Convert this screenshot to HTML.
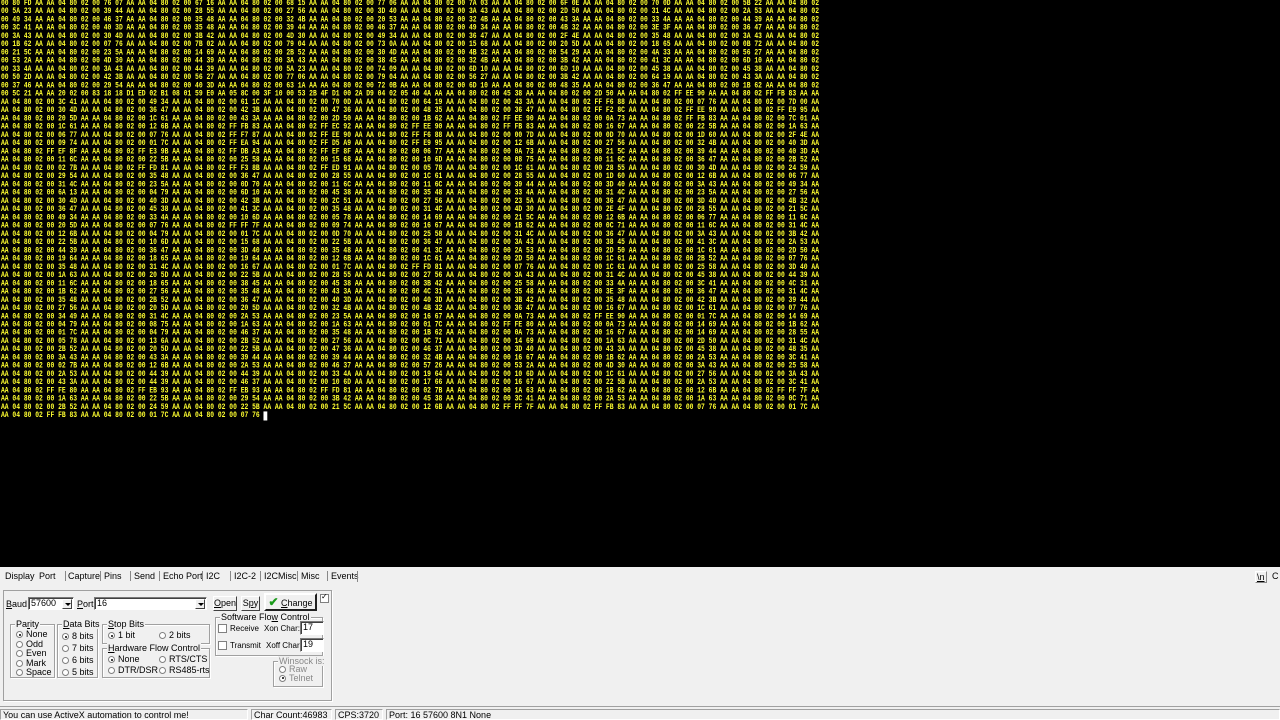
<!DOCTYPE html>
<html><head><meta charset="utf-8">
<style>
*{margin:0;padding:0;box-sizing:border-box}
body{width:1280px;height:720px;overflow:hidden;background:#f0f0f0;font-family:"Liberation Sans",sans-serif;font-size:9px;color:#000;position:relative}
#term{position:absolute;left:0;top:0;width:1280px;height:567px;background:#000;overflow:hidden}
#hex{position:absolute;left:1px;top:0;white-space:pre;font-family:"Liberation Mono",monospace;font-weight:bold;font-size:10px;line-height:10px;color:#ffff30;transform:scale(0.634,0.8245);transform-origin:0 0}
.cur{background:#fff;color:#fff}
.a{position:absolute;white-space:nowrap}
.tabs{position:absolute;top:571px;left:0;height:14px;width:1280px}
.box{position:absolute;border:1px solid #a0a0a0;box-shadow:1px 1px 0 #fff}
.grp{position:absolute;border:1px solid #a0a0a0;box-shadow:inset 1px 1px 0 #fff,1px 1px 0 #fff}
.lg{position:absolute;top:-6px;left:4px;background:#f0f0f0;padding:0 1px;white-space:nowrap}
.rad{display:inline-block;width:7px;height:7px;border-radius:50%;border:1px solid #808080;background:#fff;vertical-align:-1px;margin-right:3px;position:relative}
.rad.on::after{content:"";position:absolute;left:1.5px;top:1.5px;width:2px;height:2px;border-radius:50%;background:#000}
.chk{position:absolute;width:9px;height:9px;border:1px solid #808080;background:#fff}
.inp{position:absolute;background:#fff;border:1px solid #7a7a7a;border-right-color:#fff;border-bottom-color:#fff;box-shadow:inset 1px 1px 0 #404040;padding-left:2px;line-height:11px}
.btn{position:absolute;border:1px solid #fff;border-right-color:#404040;border-bottom-color:#404040;background:#f0f0f0;text-align:center;line-height:13px}
.dd{position:absolute;right:1px;top:1px;width:10px;height:10px;background:#f0f0f0;border:1px solid #fff;border-right-color:#404040;border-bottom-color:#404040}
.dd::after{content:"";position:absolute;left:2px;top:3px;border-left:3px solid transparent;border-right:3px solid transparent;border-top:3px solid #000}
.sb{position:absolute;top:709px;height:11px;border:1px solid #a0a0a0;border-right-color:#fff;border-bottom-color:#fff;line-height:10px;padding-left:2px;white-space:nowrap}
u{text-decoration:underline}
</style></head><body>
<div id="term"><div id="hex">00 80 FD AA AA 04 80 02 00 76 07 AA AA 04 80 02 00 67 16 AA AA 04 80 02 00 68 15 AA AA 04 80 02 00 77 06 AA AA 04 80 02 00 7A 03 AA AA 04 80 02 00 6F 0E AA AA 04 80 02 00 70 0D AA AA 04 80 02 00 5B 22 AA AA 04 80 02
00 5A 23 AA AA 04 80 02 00 39 44 AA AA 04 80 02 00 28 55 AA AA 04 80 02 00 27 56 AA AA 04 80 02 00 3D 40 AA AA 04 80 02 00 3A 43 AA AA 04 80 02 00 2D 50 AA AA 04 80 02 00 31 4C AA AA 04 80 02 00 2A 53 AA AA 04 80 02
00 49 34 AA AA 04 80 02 00 46 37 AA AA 04 80 02 00 35 48 AA AA 04 80 02 00 32 4B AA AA 04 80 02 00 20 53 AA AA 04 80 02 00 32 4B AA AA 04 80 02 00 43 3A AA AA 04 80 02 00 33 4A AA AA 04 80 02 00 44 39 AA AA 04 80 02
00 3C 41 AA AA 04 80 02 00 40 3D AA AA 04 80 02 00 35 48 AA AA 04 80 02 00 39 44 AA AA 04 80 02 00 46 37 AA AA 04 80 02 00 49 34 AA AA 04 80 02 00 4B 32 AA AA 04 80 02 00 3E 3F AA AA 04 80 02 00 36 47 AA AA 04 80 02
00 3A 43 AA AA 04 80 02 00 30 4D AA AA 04 80 02 00 3B 42 AA AA 04 80 02 00 4D 30 AA AA 04 80 02 00 49 34 AA AA 04 80 02 00 36 47 AA AA 04 80 02 00 2F 4E AA AA 04 80 02 00 35 48 AA AA 04 80 02 00 3A 43 AA AA 04 80 02
00 1B 62 AA AA 04 80 02 00 07 76 AA AA 04 80 02 00 7B 02 AA AA 04 80 02 00 79 04 AA AA 04 80 02 00 73 0A AA AA 04 80 02 00 15 68 AA AA 04 80 02 00 20 5D AA AA 04 80 02 00 18 65 AA AA 04 80 02 00 0B 72 AA AA 04 80 02
00 21 5C AA AA 04 80 02 00 23 5A AA AA 04 80 02 00 14 69 AA AA 04 80 02 00 2B 52 AA AA 04 80 02 00 30 4D AA AA 04 80 02 00 4B 32 AA AA 04 80 02 00 54 29 AA AA 04 80 02 00 4A 33 AA AA 04 80 02 00 56 27 AA AA 04 80 02
00 53 2A AA AA 04 80 02 00 4D 30 AA AA 04 80 02 00 44 39 AA AA 04 80 02 00 3A 43 AA AA 04 80 02 00 38 45 AA AA 04 80 02 00 32 4B AA AA 04 80 02 00 3B 42 AA AA 04 80 02 00 41 3C AA AA 04 80 02 00 6D 10 AA AA 04 80 02
00 33 4A AA AA 04 80 02 00 3A 43 AA AA 04 80 02 00 44 39 AA AA 04 80 02 00 5A 23 AA AA 04 80 02 00 74 09 AA AA 04 80 02 00 6D 10 AA AA 04 80 02 00 6D 10 AA AA 04 80 02 00 45 38 AA AA 04 80 02 00 45 38 AA AA 04 80 02
00 50 2D AA AA 04 80 02 00 42 3B AA AA 04 80 02 00 56 27 AA AA 04 80 02 00 77 06 AA AA 04 80 02 00 79 04 AA AA 04 80 02 00 56 27 AA AA 04 80 02 00 3B 42 AA AA 04 80 02 00 64 19 AA AA 04 80 02 00 43 3A AA AA 04 80 02
00 37 46 AA AA 04 80 02 00 29 54 AA AA 04 80 02 00 40 3D AA AA 04 80 02 00 63 1A AA AA 04 80 02 00 72 0B AA AA 04 80 02 00 6D 10 AA AA 04 80 02 00 48 35 AA AA 04 80 02 00 36 47 AA AA 04 80 02 00 1B 62 AA AA 04 80 02
00 5C 21 AA AA 20 02 00 83 18 18 D1 ED 02 B1 08 01 59 E0 AA 05 8C 00 3F 10 00 53 2B 4F D1 00 2A D9 04 02 05 40 4A AA AA 04 80 02 00 45 38 AA AA 04 80 02 00 2D 50 AA AA 04 80 02 FF EE 90 AA AA 04 80 02 FF FB 83 AA AA
AA 04 80 02 00 3C 41 AA AA 04 80 02 00 49 34 AA AA 04 80 02 00 61 1C AA AA 04 80 02 00 70 0D AA AA 04 80 02 00 64 19 AA AA 04 80 02 00 43 3A AA AA 04 80 02 FF F6 88 AA AA 04 80 02 00 07 76 AA AA 04 80 02 00 7D 00 AA
AA 04 80 02 00 30 4D AA AA 04 80 02 00 36 47 AA AA 04 80 02 00 42 3B AA AA 04 80 02 00 47 36 AA AA 04 80 02 00 48 35 AA AA 04 80 02 00 36 47 AA AA 04 80 02 FF F2 8C AA AA 04 80 02 FF EE 90 AA AA 04 80 02 FF E9 95 AA
AA 04 80 02 00 20 5D AA AA 04 80 02 00 1C 61 AA AA 04 80 02 00 43 3A AA AA 04 80 02 00 2D 50 AA AA 04 80 02 00 1B 62 AA AA 04 80 02 FF EE 90 AA AA 04 80 02 00 0A 73 AA AA 04 80 02 FF FB 83 AA AA 04 80 02 00 7C 01 AA
AA 04 80 02 00 1C 61 AA AA 04 80 02 00 12 6B AA AA 04 80 02 FF FB 83 AA AA 04 80 02 FF EC 92 AA AA 04 80 02 FF EE 90 AA AA 04 80 02 FF FB 83 AA AA 04 80 02 00 16 67 AA AA 04 80 02 00 22 5B AA AA 04 80 02 00 1A 63 AA
AA 04 80 02 00 06 77 AA AA 04 80 02 00 07 76 AA AA 04 80 02 FF F7 87 AA AA 04 80 02 FF EE 90 AA AA 04 80 02 FF F6 88 AA AA 04 80 02 00 00 7D AA AA 04 80 02 00 0D 70 AA AA 04 80 02 00 1D 60 AA AA 04 80 02 00 2F 4E AA
AA 04 80 02 00 09 74 AA AA 04 80 02 00 01 7C AA AA 04 80 02 FF EA 94 AA AA 04 80 02 FF D5 A9 AA AA 04 80 02 FF E9 95 AA AA 04 80 02 00 12 6B AA AA 04 80 02 00 27 56 AA AA 04 80 02 00 32 4B AA AA 04 80 02 00 40 3D AA
AA 04 80 02 FF EF 8F AA AA 04 80 02 FF E3 9B AA AA 04 80 02 FF DB A3 AA AA 04 80 02 FF EF 8F AA AA 04 80 02 00 06 77 AA AA 04 80 02 00 0A 73 AA AA 04 80 02 00 21 5C AA AA 04 80 02 00 39 44 AA AA 04 80 02 00 40 3D AA
AA 04 80 02 00 11 6C AA AA 04 80 02 00 22 5B AA AA 04 80 02 00 25 58 AA AA 04 80 02 00 15 68 AA AA 04 80 02 00 10 6D AA AA 04 80 02 00 08 75 AA AA 04 80 02 00 11 6C AA AA 04 80 02 00 36 47 AA AA 04 80 02 00 2B 52 AA
AA 04 80 02 00 02 7B AA AA 04 80 02 FF FD 81 AA AA 04 80 02 FF F3 8B AA AA 04 80 02 FF ED 91 AA AA 04 80 02 00 05 78 AA AA 04 80 02 00 1C 61 AA AA 04 80 02 00 28 55 AA AA 04 80 02 00 30 4D AA AA 04 80 02 00 24 59 AA
AA 04 80 02 00 29 54 AA AA 04 80 02 00 35 48 AA AA 04 80 02 00 36 47 AA AA 04 80 02 00 28 55 AA AA 04 80 02 00 1C 61 AA AA 04 80 02 00 28 55 AA AA 04 80 02 00 1D 60 AA AA 04 80 02 00 12 6B AA AA 04 80 02 00 06 77 AA
AA 04 80 02 00 31 4C AA AA 04 80 02 00 23 5A AA AA 04 80 02 00 0D 70 AA AA 04 80 02 00 11 6C AA AA 04 80 02 00 11 6C AA AA 04 80 02 00 39 44 AA AA 04 80 02 00 3D 40 AA AA 04 80 02 00 3A 43 AA AA 04 80 02 00 49 34 AA
AA 04 80 02 00 6A 13 AA AA 04 80 02 00 04 79 AA AA 04 80 02 00 6D 10 AA AA 04 80 02 00 45 38 AA AA 04 80 02 00 35 48 AA AA 04 80 02 00 33 4A AA AA 04 80 02 00 31 4C AA AA 04 80 02 00 23 5A AA AA 04 80 02 00 27 56 AA
AA 04 80 02 00 30 4D AA AA 04 80 02 00 40 3D AA AA 04 80 02 00 42 3B AA AA 04 80 02 00 2C 51 AA AA 04 80 02 00 27 56 AA AA 04 80 02 00 23 5A AA AA 04 80 02 00 36 47 AA AA 04 80 02 00 3D 40 AA AA 04 80 02 00 4B 32 AA
AA 04 80 02 00 36 47 AA AA 04 80 02 00 45 38 AA AA 04 80 02 00 41 3C AA AA 04 80 02 00 35 48 AA AA 04 80 02 00 31 4C AA AA 04 80 02 00 4D 30 AA AA 04 80 02 00 2E 4F AA AA 04 80 02 00 28 55 AA AA 04 80 02 00 21 5C AA
AA 04 80 02 00 49 34 AA AA 04 80 02 00 33 4A AA AA 04 80 02 00 10 6D AA AA 04 80 02 00 05 78 AA AA 04 80 02 00 14 69 AA AA 04 80 02 00 21 5C AA AA 04 80 02 00 12 6B AA AA 04 80 02 00 06 77 AA AA 04 80 02 00 11 6C AA
AA 04 80 02 00 20 5D AA AA 04 80 02 00 07 76 AA AA 04 80 02 FF FF 7F AA AA 04 80 02 00 09 74 AA AA 04 80 02 00 16 67 AA AA 04 80 02 00 1B 62 AA AA 04 80 02 00 0C 71 AA AA 04 80 02 00 11 6C AA AA 04 80 02 00 31 4C AA
AA 04 80 02 00 12 6B AA AA 04 80 02 00 04 79 AA AA 04 80 02 00 01 7C AA AA 04 80 02 00 0D 70 AA AA 04 80 02 00 25 58 AA AA 04 80 02 00 31 4C AA AA 04 80 02 00 36 47 AA AA 04 80 02 00 3A 43 AA AA 04 80 02 00 3B 42 AA
AA 04 80 02 00 22 5B AA AA 04 80 02 00 10 6D AA AA 04 80 02 00 15 68 AA AA 04 80 02 00 22 5B AA AA 04 80 02 00 36 47 AA AA 04 80 02 00 3A 43 AA AA 04 80 02 00 38 45 AA AA 04 80 02 00 41 3C AA AA 04 80 02 00 2A 53 AA
AA 04 80 02 00 44 39 AA AA 04 80 02 00 36 47 AA AA 04 80 02 00 3D 40 AA AA 04 80 02 00 35 48 AA AA 04 80 02 00 41 3C AA AA 04 80 02 00 2A 53 AA AA 04 80 02 00 2D 50 AA AA 04 80 02 00 1C 61 AA AA 04 80 02 00 2D 50 AA
AA 04 80 02 00 19 64 AA AA 04 80 02 00 18 65 AA AA 04 80 02 00 19 64 AA AA 04 80 02 00 12 6B AA AA 04 80 02 00 1C 61 AA AA 04 80 02 00 2D 50 AA AA 04 80 02 00 1C 61 AA AA 04 80 02 00 2B 52 AA AA 04 80 02 00 07 76 AA
AA 04 80 02 00 35 48 AA AA 04 80 02 00 31 4C AA AA 04 80 02 00 16 67 AA AA 04 80 02 00 01 7C AA AA 04 80 02 FF FD 81 AA AA 04 80 02 00 07 76 AA AA 04 80 02 00 1C 61 AA AA 04 80 02 00 25 58 AA AA 04 80 02 00 3D 40 AA
AA 04 80 02 00 1A 63 AA AA 04 80 02 00 20 5D AA AA 04 80 02 00 22 5B AA AA 04 80 02 00 28 55 AA AA 04 80 02 00 27 56 AA AA 04 80 02 00 3A 43 AA AA 04 80 02 00 31 4C AA AA 04 80 02 00 45 38 AA AA 04 80 02 00 44 39 AA
AA 04 80 02 00 11 6C AA AA 04 80 02 00 18 65 AA AA 04 80 02 00 38 45 AA AA 04 80 02 00 45 38 AA AA 04 80 02 00 3B 42 AA AA 04 80 02 00 25 58 AA AA 04 80 02 00 33 4A AA AA 04 80 02 00 3C 41 AA AA 04 80 02 00 4C 31 AA
AA 04 80 02 00 1B 62 AA AA 04 80 02 00 27 56 AA AA 04 80 02 00 35 48 AA AA 04 80 02 00 43 3A AA AA 04 80 02 00 4C 31 AA AA 04 80 02 00 35 48 AA AA 04 80 02 00 3E 3F AA AA 04 80 02 00 36 47 AA AA 04 80 02 00 31 4C AA
AA 04 80 02 00 35 48 AA AA 04 80 02 00 2B 52 AA AA 04 80 02 00 36 47 AA AA 04 80 02 00 40 3D AA AA 04 80 02 00 40 3D AA AA 04 80 02 00 3B 42 AA AA 04 80 02 00 35 48 AA AA 04 80 02 00 42 3B AA AA 04 80 02 00 39 44 AA
AA 04 80 02 00 27 56 AA AA 04 80 02 00 20 5D AA AA 04 80 02 00 20 5D AA AA 04 80 02 00 32 4B AA AA 04 80 02 00 4B 32 AA AA 04 80 02 00 36 47 AA AA 04 80 02 00 16 67 AA AA 04 80 02 00 1C 61 AA AA 04 80 02 00 07 76 AA
AA 04 80 02 00 34 49 AA AA 04 80 02 00 31 4C AA AA 04 80 02 00 2A 53 AA AA 04 80 02 00 23 5A AA AA 04 80 02 00 16 67 AA AA 04 80 02 00 0A 73 AA AA 04 80 02 FF EE 90 AA AA 04 80 02 00 01 7C AA AA 04 80 02 00 14 69 AA
AA 04 80 02 00 04 79 AA AA 04 80 02 00 08 75 AA AA 04 80 02 00 1A 63 AA AA 04 80 02 00 1A 63 AA AA 04 80 02 00 01 7C AA AA 04 80 02 FF FE 80 AA AA 04 80 02 00 0A 73 AA AA 04 80 02 00 14 69 AA AA 04 80 02 00 1B 62 AA
AA 04 80 02 00 01 7C AA AA 04 80 02 00 04 79 AA AA 04 80 02 00 46 37 AA AA 04 80 02 00 35 48 AA AA 04 80 02 00 1B 62 AA AA 04 80 02 00 0A 73 AA AA 04 80 02 00 16 67 AA AA 04 80 02 00 14 69 AA AA 04 80 02 00 28 55 AA
AA 04 80 02 00 05 78 AA AA 04 80 02 00 13 6A AA AA 04 80 02 00 2B 52 AA AA 04 80 02 00 27 56 AA AA 04 80 02 00 0C 71 AA AA 04 80 02 00 14 69 AA AA 04 80 02 00 1A 63 AA AA 04 80 02 00 2D 50 AA AA 04 80 02 00 31 4C AA
AA 04 80 02 00 2B 52 AA AA 04 80 02 00 20 5D AA AA 04 80 02 00 22 5B AA AA 04 80 02 00 47 36 AA AA 04 80 02 00 46 37 AA AA 04 80 02 00 3D 40 AA AA 04 80 02 00 43 3A AA AA 04 80 02 00 45 38 AA AA 04 80 02 00 48 35 AA
AA 04 80 02 00 3A 43 AA AA 04 80 02 00 43 3A AA AA 04 80 02 00 39 44 AA AA 04 80 02 00 39 44 AA AA 04 80 02 00 32 4B AA AA 04 80 02 00 16 67 AA AA 04 80 02 00 1B 62 AA AA 04 80 02 00 2A 53 AA AA 04 80 02 00 3C 41 AA
AA 04 80 02 00 02 7B AA AA 04 80 02 00 12 6B AA AA 04 80 02 00 2A 53 AA AA 04 80 02 00 46 37 AA AA 04 80 02 00 57 26 AA AA 04 80 02 00 53 2A AA AA 04 80 02 00 4D 30 AA AA 04 80 02 00 3A 43 AA AA 04 80 02 00 25 58 AA
AA 04 80 02 00 2A 53 AA AA 04 80 02 00 44 39 AA AA 04 80 02 00 44 39 AA AA 04 80 02 00 33 4A AA AA 04 80 02 00 19 64 AA AA 04 80 02 00 10 6D AA AA 04 80 02 00 1C 61 AA AA 04 80 02 00 27 56 AA AA 04 80 02 00 3A 43 AA
AA 04 80 02 00 43 3A AA AA 04 80 02 00 44 39 AA AA 04 80 02 00 46 37 AA AA 04 80 02 00 10 6D AA AA 04 80 02 00 17 66 AA AA 04 80 02 00 16 67 AA AA 04 80 02 00 22 5B AA AA 04 80 02 00 2A 53 AA AA 04 80 02 00 3C 41 AA
AA 04 80 02 FF FE 80 AA AA 04 80 02 FF EB 93 AA AA 04 80 02 FF EB 93 AA AA 04 80 02 FF FD 81 AA AA 04 80 02 00 02 7B AA AA 04 80 02 00 1A 63 AA AA 04 80 02 00 1B 62 AA AA 04 80 02 00 12 6B AA AA 04 80 02 FF FF 7F AA
AA 04 80 02 00 1A 63 AA AA 04 80 02 00 22 5B AA AA 04 80 02 00 29 54 AA AA 04 80 02 00 3B 42 AA AA 04 80 02 00 45 38 AA AA 04 80 02 00 3C 41 AA AA 04 80 02 00 2A 53 AA AA 04 80 02 00 1A 63 AA AA 04 80 02 00 0C 71 AA
AA 04 80 02 00 2B 52 AA AA 04 80 02 00 24 59 AA AA 04 80 02 00 22 5B AA AA 04 80 02 00 21 5C AA AA 04 80 02 00 12 6B AA AA 04 80 02 FF FF 7F AA AA 04 80 02 FF FB 83 AA AA 04 80 02 00 07 76 AA AA 04 80 02 00 01 7C AA
AA 04 80 02 FF FB 83 AA AA 04 80 02 00 01 7C AA AA 04 80 02 00 07 76 <span class="cur"> </span></div></div>

<div class="tabs">
<span class="a" style="left:5px">Display</span>
<span class="a" style="left:39px">Port</span>
<span class="a" style="left:65px;border-left:1px solid #888;padding-left:2px">Capture</span>
<span class="a" style="left:100px;border-left:1px solid #888;padding-left:3px">Pins</span>
<span class="a" style="left:130px;border-left:1px solid #888;padding-left:3px">Send</span>
<span class="a" style="left:159px;border-left:1px solid #888;padding-left:3px">Echo Port</span>
<span class="a" style="left:202px;border-left:1px solid #888;padding-left:3px">I2C</span>
<span class="a" style="left:230px;border-left:1px solid #888;padding-left:3px">I2C-2</span>
<span class="a" style="left:260px;border-left:1px solid #888;padding-left:3px">I2CMisc</span>
<span class="a" style="left:297px;border-left:1px solid #888;padding-left:3px">Misc</span>
<span class="a" style="left:327px;border-left:1px solid #888;padding-left:3px">Events</span>
<span class="a" style="left:357px;border-left:1px solid #888;height:11px"></span>
<span class="a" style="left:1255px;border:1px solid #888;border-top-color:#fff;border-left-color:#fff;padding:0 1px;line-height:10px"><u>\n</u></span>
<span class="a" style="left:1272px">C</span>
</div>

<div class="box" style="left:3px;top:590px;width:329px;height:111px"></div>
<span class="a" style="left:6px;top:599px"><u>B</u>aud</span>
<div class="inp" style="left:28px;top:597px;width:46px;height:13px">57600<div class="dd"></div></div>
<span class="a" style="left:77px;top:599px"><u>P</u>ort</span>
<div class="inp" style="left:94px;top:597px;width:113px;height:13px">16<div class="dd"></div></div>
<div class="btn" style="left:213px;top:596px;width:24px;height:15px;border-color:#fff #404040 #404040 #fff"><u>O</u>pen</div>
<div class="btn" style="left:241px;top:596px;width:19px;height:15px">S<u>p</u>y</div>
<div class="btn" style="left:264px;top:593px;width:53px;height:18px;border:2px solid;border-color:#fff #202020 #202020 #fff;line-height:14px"><span style="color:#1a9a1a;font-weight:bold;font-size:12px">✔</span> <u>C</u>hange</div>
<div class="chk" style="left:320px;top:594px"><span style="position:absolute;left:0;top:-3px;font-size:8px">✓</span></div>

<div class="grp" style="left:10px;top:624px;width:45px;height:54px"><span class="lg">Pa<u>r</u>ity</span>
<div class="a" style="left:5px;top:5px;line-height:9.5px"><span class="rad on"></span>None<br><span class="rad"></span>Odd<br><span class="rad"></span>Even<br><span class="rad"></span>Mark<br><span class="rad"></span>Space</div></div>
<div class="grp" style="left:57px;top:624px;width:41px;height:54px"><span class="lg"><u>D</u>ata Bits</span>
<div class="a" style="left:4px;top:5px;line-height:12px"><span class="rad on"></span>8 bits<br><span class="rad"></span>7 bits<br><span class="rad"></span>6 bits<br><span class="rad"></span>5 bits</div></div>
<div class="grp" style="left:102px;top:624px;width:108px;height:20px"><span class="lg"><u>S</u>top Bits</span>
<span class="a" style="left:5px;top:5px"><span class="rad on"></span>1 bit</span><span class="a" style="left:56px;top:5px"><span class="rad"></span>2 bits</span></div>
<div class="grp" style="left:102px;top:648px;width:108px;height:30px"><span class="lg"><u>H</u>ardware Flow Control</span>
<div class="a" style="left:5px;top:5px;line-height:11px"><span class="rad on"></span>None<br><span class="rad"></span>DTR/DSR</div>
<div class="a" style="left:56px;top:5px;line-height:11px"><span class="rad"></span>RTS/CTS<br><span class="rad"></span>RS485-rts</div></div>
<div class="grp" style="left:215px;top:617px;width:108px;height:39px;font-size:8px"><span class="lg" style="font-size:9px">Software Flo<u>w</u> Control</span>
<div class="chk" style="left:2px;top:6px"></div><span class="a" style="left:14px;top:6px">Receive</span><span class="a" style="left:48px;top:6px">Xon Char:</span>
<div class="chk" style="left:2px;top:23px"></div><span class="a" style="left:14px;top:23px">Transmit</span><span class="a" style="left:50px;top:23px">Xoff Char:</span></div>
<div class="inp" style="left:300px;top:621px;width:24px;height:14px">17</div>
<div class="inp" style="left:300px;top:638px;width:24px;height:14px">19</div>
<div class="grp" style="left:273px;top:661px;width:50px;height:26px;color:#888"><span class="lg" style="color:#888">Winsock is:</span>
<div class="a" style="left:5px;top:3px;line-height:8.5px"><span class="rad"></span>Raw<br><span class="rad on"></span>Telnet</div></div>

<div style="position:absolute;left:0;top:706px;width:1280px;border-top:1px solid #a0a0a0"></div>
<div class="sb" style="left:0;width:248px">You can use ActiveX automation to control me!</div>
<div class="sb" style="left:251px;width:81px">Char Count:46983</div>
<div class="sb" style="left:335px;width:48px">CPS:3720</div>
<div class="sb" style="left:386px;width:894px">Port: 16 57600 8N1 None</div>
</body></html>
